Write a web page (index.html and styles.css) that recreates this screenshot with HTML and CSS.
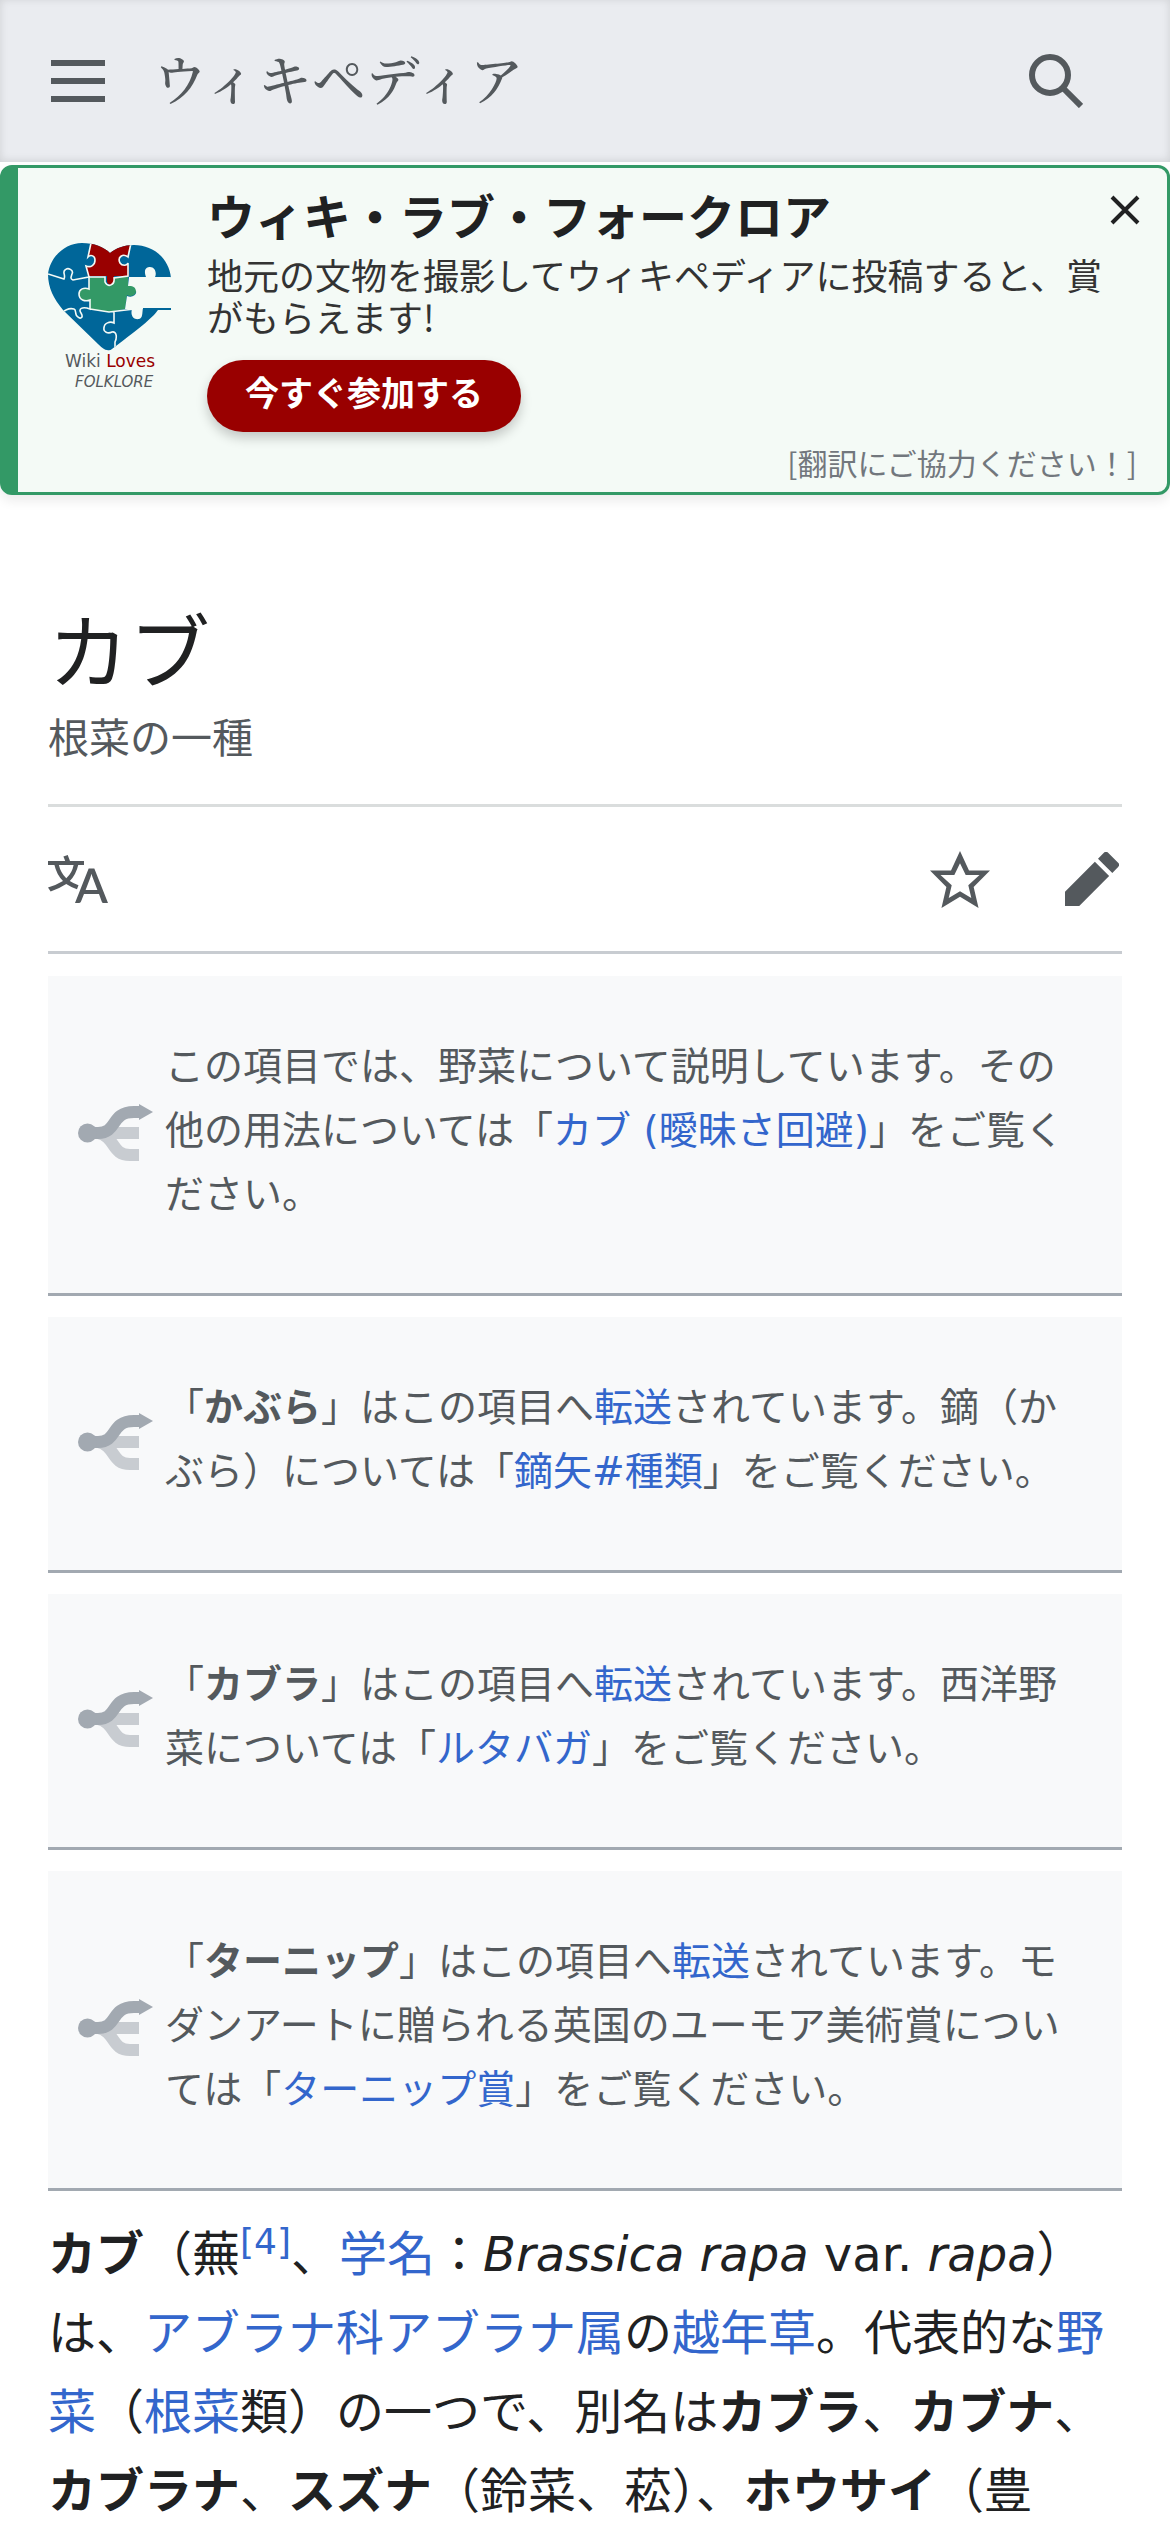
FILE: index.html
```html
<!DOCTYPE html>
<html lang="ja">
<head>
<meta charset="utf-8">
<meta name="viewport" content="width=device-width, initial-scale=1">
<title>カブ - ウィキペディア</title>
<link rel="stylesheet" href="styles.css">
</head>
<body>
<svg class="sprite" aria-hidden="true">
  <symbol id="fork" viewBox="0 0 75 58">
    <path d="M18 29H61M20 29C38 33 33 51 52 51H61" fill="none" stroke="#c8ccd1" stroke-width="12"/>
    <path d="M9 29H20C40 29 32 8 56 8H62" fill="none" stroke="#a2a9b1" stroke-width="12"/>
    <circle cx="9.500" cy="29" r="9.500" fill="#a2a9b1"/>
    <path d="M61 0L75 8L61 16Z" fill="#a2a9b1"/>
  </symbol>
</svg>
<header class="site-header">
  <button class="icon-button" type="button" aria-label="メニュー">
    <svg width="54" height="42" viewBox="0 0 54 42"><path d="M0 0h54v6H0zM0 18h54v6H0zM0 36h54v6H0z" fill="#54595d"/></svg>
  </button>
  <a class="wordmark" href="#">ウィキペディア</a>
  <button class="icon-button search" type="button" aria-label="検索">
    <svg width="54" height="54" viewBox="0 0 54 54" fill="none" stroke="#54595d" stroke-width="6"><circle cx="21" cy="21" r="18"/><path d="M34 34L52 52"/></svg>
  </button>
</header>

<aside class="banner">
  <svg class="banner-logo" viewBox="0 0 124 148" role="img" aria-label="Wiki Loves Folklore">
    <clipPath id="heart"><path d="M59 107Q56 107 50 101L15 67C6 56 0 45 0 31C2 14 17 0 34 0C46 0 56 4 62 10C68 5 76 2 86 2C105 2 121 15 123 35V67H110C105 74 96 82 64 106Q62 108 59 107Z"/></clipPath>
    <g clip-path="url(#heart)">
      <path fill="#069" d="M0 0h124v110H0z"/>
      <path fill="#900" d="M43 0H83L79 14C72 11 70 16 72 20C74 23 79 22 80 20L81 33H66V38C67 43 59 43 59 38V33H40L38 23C43 25 47 22 47 17C47 13 43 11 40 14Z"/>
      <path fill="#396" d="M41 34H57V39C60 45 67 42 66 35L80 33V43C86 42 89 45 88 49C87 53 82 54 79 52L77 66L61 69L42 66V57C36 59 31 57 31 50C32 45 37 44 41 46Z"/>
      <path fill="#f4faf6" d="M81 34H98C95 26 99 24 102 24C107 24 109 30 107 34H124V65H95C94 70 95 75 91 76C86 77 82 73 84 66L77 66L79 53C84 55 89 52 88 48C87 43 84 43 80 43Z"/>
      <path fill="none" stroke="#f4faf6" stroke-width="1.600" d="M43 0L40 14C43 11 47 13 47 17C47 22 43 25 38 23L41 34H57V39C60 45 67 42 66 35L80 33L80 20C79 23 74 23 72 20C69 14 75 10 80 14L83 0M0 31L16 36C18 32 14 29 17 27C20 24 26 27 24 31C23 34 22 36 25 37L41 34L41 46C36 44 31 46 31 51C31 57 37 59 42 57V66C34 63 30 66 33 70C36 75 32 76 30 74C26 72 29 67 26 66C22 65 17 67 14 70M42 66L61 69L95 65M66 69V80C62 78 56 80 56 85C55 89 60 91 64 89C69 88 69 95 67 99V108"/>
    </g>
    <text x="17" y="124" class="logo-line"><tspan fill="#54595d">Wiki</tspan> <tspan fill="#900">Loves</tspan></text>
    <text x="27" y="144" class="logo-line logo-sub">FOLKLORE</text>
  </svg>
  <div class="banner-body">
    <h2 class="banner-title">ウィキ・ラブ・フォークロア</h2>
    <p class="banner-text">地元の文物を撮影してウィキペディアに投稿すると、賞がもらえます!</p>
    <a class="banner-cta" href="#">今すぐ参加する</a>
    <a class="banner-translate" href="#">[翻訳にご協力ください！]</a>
  </div>
  <button class="banner-close" type="button" aria-label="閉じる">
    <svg width="30" height="30" viewBox="0 0 30 30"><path d="M2 2L28 28M28 2L2 28" stroke="#202122" stroke-width="4"/></svg>
  </button>
</aside>

<main class="page">
  <div class="heading">
    <h1 class="title">カブ</h1>
    <p class="tagline">根菜の一種</p>
  </div>
  <nav class="actions" aria-label="ページ操作">
    <button class="icon-button" type="button" aria-label="言語">
      <svg width="60" height="48" viewBox="0 2 20 16"><path fill="#54595d" d="M20 18h-1.440a.6.6 0 0 1-.4-.12.8.8 0 0 1-.23-.31L17 15h-5l-1 2.540a.8.8 0 0 1-.22.300.6.6 0 0 1-.4.140H9l4.550-11.470h1.890zm-3.530-4.310L14.890 9.500a11.600 11.600 0 0 1-.39-1.240q-.09.370-.19.690l-.19.560-1.580 4.190zm-6.300-1.580a13.400 13.400 0 0 1-2.910-1.410 11.500 11.500 0 0 0 2.810-5.370H12V4H7.310a4 4 0 0 0-.2-.56C6.870 2.790 6.600 2 6.600 2l-1.470.5s.4.890.6 1.500H0v1.330h2.150A11.230 11.230 0 0 0 5 10.700a17.200 17.200 0 0 1-5 2.100q.56.820.87 1.380a23.300 23.300 0 0 0 5.220-2.510 15.600 15.600 0 0 0 3.560 1.770zM3.630 5.330h4.910a8.100 8.100 0 0 1-2.450 4.450 9.110 9.110 0 0 1-2.460-4.450"/></svg>
    </button>
    <button class="icon-button watch" type="button" aria-label="ウォッチ">
      <svg width="60" height="57" viewBox="0 .5 20 19"><path fill="#54595d" d="M20 7h-7L10 .5 7 7H0l5.460 5.470-1.640 7 6.180-3.700 6.180 3.730-1.630-7zm-10 6.900-3.760 2.270 1-4.280L3.500 8.500h4.610L10 4.600l1.900 3.900h4.600l-3.730 3.400 1 4.280z"/></svg>
    </button>
    <button class="icon-button edit" type="button" aria-label="編集">
      <svg width="54" height="54" viewBox="1 1 18 18"><path fill="#54595d" d="m16.770 8 1.940-2a1 1 0 0 0 0-1.430l-3.340-3.300a1 1 0 0 0-1.410 0L12 3.230zM1 14.250V19h4.750l9.960-9.960-4.750-4.750z"/></svg>
    </button>
  </nav>

  <div class="hatnote">
    <svg class="fork"><use href="#fork"/></svg>
    <p>この項目では、野菜について説明しています。その他の用法については「<a href="#">カブ (曖昧さ回避)</a>」をご覧ください。</p>
  </div>
  <div class="hatnote">
    <svg class="fork"><use href="#fork"/></svg>
    <p>「<b>かぶら</b>」はこの項目へ<a href="#">転送</a>されています。鏑（かぶら）については「<a href="#">鏑矢#種類</a>」をご覧ください。</p>
  </div>
  <div class="hatnote">
    <svg class="fork"><use href="#fork"/></svg>
    <p>「<b>カブラ</b>」はこの項目へ<a href="#">転送</a>されています。西洋野菜については「<a href="#">ルタバガ</a>」をご覧ください。</p>
  </div>
  <div class="hatnote">
    <svg class="fork"><use href="#fork"/></svg>
    <p>「<b>ターニップ</b>」はこの項目へ<a href="#">転送</a>されています。モダンアートに贈られる英国のユーモア美術賞については「<a href="#">ターニップ賞</a>」をご覧ください。</p>
  </div>

  <p class="lead"><b>カブ</b>（蕪<sup><a href="#">[4]</a></sup>、<a href="#">学名</a>：<i>Brassica rapa</i> var. <i>rapa</i>）は、<a href="#">アブラナ科</a><a href="#">アブラナ属</a>の<a href="#">越年草</a>。代表的な<a href="#">野菜</a>（<a href="#">根菜</a>類）の一つで、別名は<b>カブラ</b>、<b>カブナ</b>、<b>カブラナ</b>、<b>スズナ</b>（鈴菜、菘）、<b>ホウサイ</b>（豊</p>
</main>
</body>
</html>
```
FILE: styles.css
```css
* { box-sizing: border-box; }
body {
  margin: 0;
  background: #fff;
  color: #202122;
  font-family: "DejaVu Sans", "Noto Sans CJK JP", sans-serif;
}
h1, h2, p { margin: 0; }
a { color: #36c; text-decoration: none; }
button { padding: 0; border: 0; background: none; cursor: pointer; }
svg { display: block; }
.sprite { position: absolute; width: 0; height: 0; }
.icon-button { display: flex; }

.site-header {
  display: flex;
  align-items: center;
  height: 162px;
  padding: 0 87px 0 51px;
  background: #eaecf0;
  box-shadow: inset 0 -1px 9px rgba(0, 0, 0, .12);
}
.wordmark {
  margin-left: 48px;
  padding-bottom: 6px;
  color: #54595d;
  font-family: "Noto Serif CJK JP", serif;
  font-size: 54px;
  font-weight: 500;
  line-height: 60px;
}
.search { margin-left: auto; }

.banner {
  position: relative;
  display: flex;
  margin-top: 3px;
  padding: 16px 30px 9px;
  border: 3px solid #396;
  border-left-width: 18px;
  border-radius: 12px;
  background: #f4faf6;
  box-shadow: 0 6px 12px rgba(0, 0, 0, .08);
  font-family: "Noto Sans CJK JP", sans-serif;
}
.banner-logo { flex: none; width: 124px; height: 148px; margin: 59px 35px 0 0; }
.logo-line { font-family: "DejaVu Sans", sans-serif; font-size: 17px; }
.logo-sub { font-size: 15px; font-style: italic; fill: #54595d; }
.banner-body { flex: 1; display: flex; flex-direction: column; align-items: flex-start; }
.banner-title { font-size: 48px; line-height: 60px; }
.banner-text { margin: 9px 30px 0 0; font-size: 36px; line-height: 42px; color: #333; }
.banner-cta {
  margin-top: 23px;
  padding: 0 38px 9px;
  border-radius: 36px;
  background: #900;
  color: #fff;
  font-size: 34px;
  font-weight: 700;
  line-height: 63px;
  box-shadow: 0 6px 12px rgba(0, 0, 0, .2);
}
.banner-translate { align-self: flex-end; margin-top: 9px; color: #72777d; font-size: 30px; line-height: 42px; }
.banner-close { position: absolute; top: 27px; right: 27px; }

.page { padding: 0 48px; }
.heading { padding: 102px 0 36px; border-bottom: 3px solid #dadddd; }
.title { font-size: 81px; font-weight: 400; line-height: 114px; }
.tagline { color: #54595d; font-size: 41px; line-height: 57px; }
.actions {
  display: flex;
  align-items: center;
  height: 147px;
  margin-bottom: 22px;
  border-bottom: 3px solid #c8ccd1;
}
.watch { margin: 0 75px 0 auto; }
.edit { margin-right: 3px; }

.hatnote {
  display: flex;
  align-items: center;
  margin-bottom: 21px;
  padding: 59px 48px 66px 30px;
  border-bottom: 3px solid #a2a9b1;
  background: #f8f9fa;
  color: #54595d;
  font-size: 39px;
  line-height: 64px;
}
.fork { flex: none; width: 75px; height: 58px; margin: 4px 12px 0 0; }
.lead { padding-top: 3px; font-size: 48px; line-height: 79px; }
.lead sup { font-size: 36px; line-height: 0; vertical-align: super; }
```
